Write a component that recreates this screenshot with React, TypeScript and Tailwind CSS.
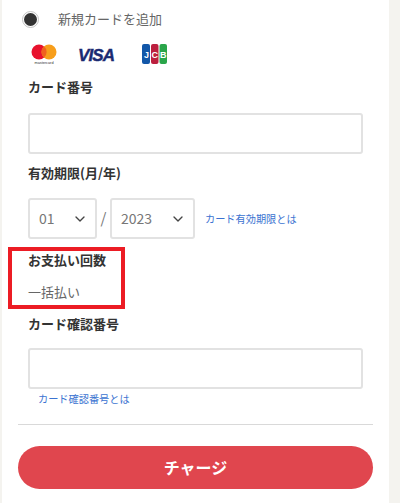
import { ChevronDown } from "lucide-react";

const Label = ({ text }: { text: string }) => {
	return <p className="text-[13px] leading-[20px] font-bold text-[#333333]">{text}</p>;
};

const TextInput = () => {
	return <div className="h-[41px] w-[335px] rounded-[3px] border-2 border-[#e2e2e2] bg-white" />;
};

const SelectBox = ({ value, width }: { value: string; width: string }) => {
	return (
		<div className={`flex h-[41px] items-center justify-between rounded-[3px] border-2 border-[#e2e2e2] bg-white pl-[9px] pr-[7px] ${width}`}>
			<span className="text-[14px] text-[#777777]">{value}</span>
			<ChevronDown size={16} strokeWidth={2} className="text-[#444444]" />
		</div>
	);
};

const Logos = () => {
	return (
		<div className="ml-[29px] mt-[16px] flex items-center">
			<svg width="26" height="21" viewBox="0 0 26 21">
				<circle cx="8" cy="8" r="7.5" fill="#e8112d" />
				<circle cx="18" cy="8" r="7.5" fill="#f79e1b" />
				<path d="M13 2.3a7.5 7.5 0 0 1 0 11.4a7.5 7.5 0 0 1 0-11.4z" fill="#f0611e" />
				<text x="13" y="20" textAnchor="middle" fontSize="3.8" fontFamily="Liberation Sans, sans-serif" fill="#333">mastercard</text>
			</svg>
			<svg width="42" height="18" viewBox="0 0 42 18" className="ml-[21px]">
				<text x="0" y="15" fontSize="17" fontWeight="700" fontStyle="italic" fontFamily="Liberation Sans, sans-serif" fill="#1a2a72" stroke="#1a2a72" strokeWidth="0.4" textLength="37">VISA</text>
			</svg>
			<svg width="27" height="21" viewBox="0 0 27 21" className="ml-[21px]">
				<rect x="1" y="0" width="8" height="20" rx="2" fill="#1257a8" />
				<rect x="10" y="0" width="7.5" height="20" rx="2" fill="#bb1f3e" />
				<rect x="18.5" y="0" width="7.5" height="20" rx="2" fill="#2aa54a" />
				<text x="5.5" y="13.5" textAnchor="middle" fontSize="9" fontWeight="700" fontFamily="Liberation Sans, sans-serif" fill="#fff">J</text>
				<text x="13.7" y="13.5" textAnchor="middle" fontSize="9" fontWeight="700" fontFamily="Liberation Sans, sans-serif" fill="#fff">C</text>
				<text x="22.2" y="13.5" textAnchor="middle" fontSize="9" fontWeight="700" fontFamily="Liberation Sans, sans-serif" fill="#fff">B</text>
			</svg>
		</div>
	);
};

export default function App() {
	return (
		<div className="h-[503px] w-[400px] overflow-hidden bg-[#f4f3ef] pl-[2px] font-['Noto_Sans_CJK_JP','Noto_Sans',sans-serif]">
			<div className="h-full w-[387px] bg-white pt-[10px]">
				<div className="ml-[20px] flex h-[18px] items-center">
					<span className="flex h-[17px] w-[17px] items-center justify-center rounded-full border border-[#c4c4c4]">
						<span className="h-[13px] w-[13px] rounded-full bg-[#333333]" />
					</span>
					<span className="ml-[19px] text-[13px] text-[#666666]">新規カードを追加</span>
				</div>
				<Logos />
				<div className="ml-[26px] mt-[12px]">
					<Label text="カード番号" />
					<div className="mt-[16px]">
						<TextInput />
					</div>
					<div className="mt-[9px]">
						<Label text="有効期限(月/年)" />
					</div>
					<div className="mt-[15px] flex items-center">
						<SelectBox value="01" width="w-[69px]" />
						<span className="w-[13px] text-center text-[15px] text-[#777777]">/</span>
						<SelectBox value="2023" width="w-[85px]" />
						<a className="ml-[10px] text-[10.2px] text-[#3b73d1]">カード有効期限とは</a>
					</div>
				</div>
				<div className="ml-[6px] mt-[8px] h-[62px] w-[117px] border-4 border-[#ec1c24] pl-[16px]">
					<div className="-mt-[1px]">
						<Label text="お支払い回数" />
					</div>
					<p className="mt-[12px] text-[13px] leading-[20px] text-[#666666]">一括払い</p>
				</div>
				<div className="ml-[26px] mt-[5px]">
					<Label text="カード確認番号" />
					<div className="mt-[14px]">
						<TextInput />
					</div>
					<a className="ml-[10px] mt-[2px] block text-[10.2px] leading-[16px] text-[#3b73d1]">カード確認番号とは</a>
				</div>
				<div className="ml-[16px] mt-[17px] w-[355px] border-t border-[#d9d9d9]" />
				<button className="ml-[16px] mt-[21px] flex h-[43px] w-[355px] items-center justify-center rounded-full bg-[#e0464e] pb-[2px] text-[16px] font-bold text-white">
					チャージ
				</button>
			</div>
		</div>
	);
}
